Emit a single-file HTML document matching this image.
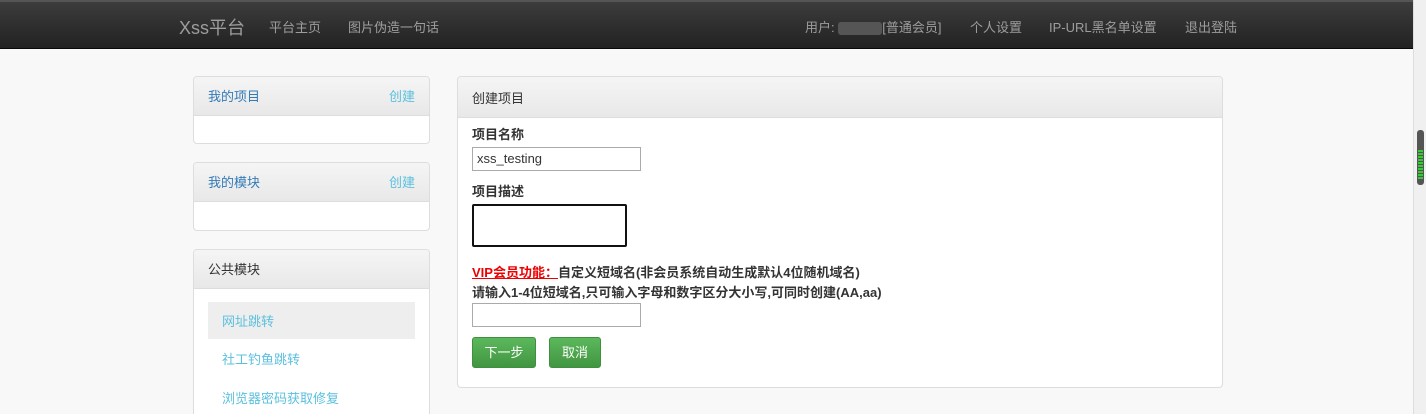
<!DOCTYPE html>
<html><head><meta charset="utf-8"><style>
*{box-sizing:border-box;margin:0;padding:0}
html{overflow:hidden;height:414px}
body{width:1426px;height:414px;overflow:hidden;background:#f8f8f8;font-family:"Liberation Sans","Noto Sans CJK SC",sans-serif;font-size:13px;color:#333;position:relative}
.nav{position:absolute;left:0;top:0;width:1413px;height:49px;background:linear-gradient(#3c3c3c,#222);border-top:2px solid #555;border-bottom:1px solid #080808}
.nav span{position:absolute;top:15px;color:#9d9d9d;font-size:13px}
.brand{font-size:18px!important;top:12px!important;color:#9d9d9d}
.sb{position:absolute;right:0;top:0;width:13px;height:414px;background:#f0f0f0;border-left:1px solid #ddd}
.thumb{position:absolute;left:3px;top:130px;width:7px;height:55px;background:#555;border-radius:3px}
.thumb i{position:absolute;left:1px;top:20px;width:5px;height:30px;background:repeating-linear-gradient(#3c3 0 2px,#555 2px 3px)}
.panel{position:absolute;background:#fff;border:1px solid #ddd;border-radius:4px;overflow:hidden}
.ph{height:39px;background:linear-gradient(#f5f5f5,#e8e8e8);border-bottom:1px solid #ddd;padding:9px 14px;color:#337ab7;font-size:13px}
.ph b{float:right;font-weight:normal;color:#5bc0de}
.item{position:absolute;left:14px;width:207px;height:37px;padding:9px 14px;color:#5bc0de}
.lbl{position:absolute;left:14px;font-weight:bold;font-size:13px;color:#333}
.inp{position:absolute;left:14px;width:169px;height:24px;border:1px solid #aaa;background:#fff;padding:3px 4px;font-size:13px}
.btn{position:absolute;top:260px;height:31px;background:linear-gradient(#5cb85c,#419641);border:1px solid #3e8f3e;border-radius:3px;color:#fff;text-align:center;line-height:29px}
</style></head><body>
<div class="nav">
<span class="brand" style="left:179px">Xss平台</span>
<span style="left:269px">平台主页</span>
<span style="left:348px">图片伪造一句话</span>
<span style="left:805px">用户: <i style="display:inline-block;width:44px;height:13px;background:#555;vertical-align:middle;border-radius:3px"></i>[普通会员]</span>
<span style="left:970px">个人设置</span>
<span style="left:1049px">IP-URL黑名单设置</span>
<span style="left:1185px">退出登陆</span>
</div>
<div class="sb"><div class="thumb"><i></i></div></div>
<div class="panel" style="left:193px;top:76px;width:237px;height:68px"><div class="ph">我的项目<b>创建</b></div></div>
<div class="panel" style="left:193px;top:162px;width:237px;height:69px"><div class="ph">我的模块<b>创建</b></div></div>
<div class="panel" style="left:193px;top:249px;width:237px;height:180px"><div class="ph" style="color:#333">公共模块</div>
<div class="item" style="top:52px;background:#eee">网址跳转</div>
<div class="item" style="top:90px">社工钓鱼跳转</div>
<div class="item" style="top:129px">浏览器密码获取修复</div>
</div>
<div class="panel" style="left:457px;top:76px;width:766px;height:312px">
<div class="ph" style="color:#333;height:41px;padding-top:11px">创建项目</div>
<div class="lbl" style="top:47px">项目名称</div>
<div class="inp" style="top:70px">xss_testing</div>
<div class="lbl" style="top:104px">项目描述</div>
<div class="inp" style="top:127px;width:155px;height:43px;border:2px solid #111;border-radius:2px"></div>
<div class="lbl" style="top:185px"><span style="color:#e00;text-decoration:underline">VIP会员功能：</span>自定义短域名(非会员系统自动生成默认4位随机域名)</div>
<div class="lbl" style="top:205px">请输入1-4位短域名,只可输入字母和数字区分大小写,可同时创建(AA,aa)</div>
<div class="inp" style="top:226px"></div>
<div class="btn" style="left:14px;width:64px">下一步</div>
<div class="btn" style="left:91px;width:52px">取消</div>
</div>
</body></html>
